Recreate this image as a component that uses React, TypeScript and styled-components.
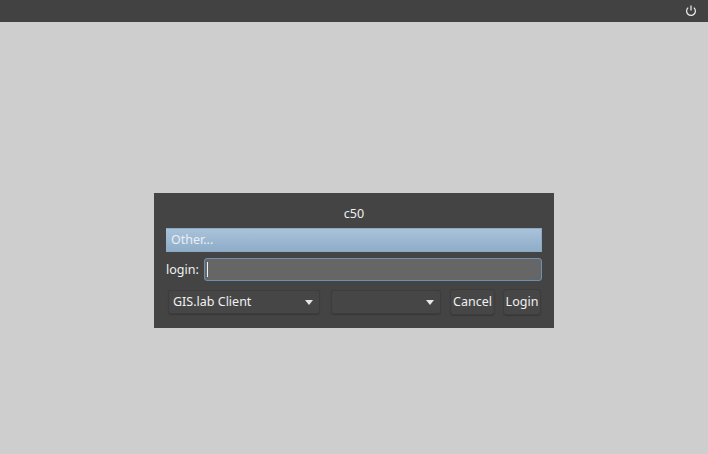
import { createGlobalStyle } from 'styled-components';
import styled from 'styled-components';

const Global = createGlobalStyle`
  html, body {
    margin: 0;
    height: 100%;
    background: #cecece;
  }
  #root {
    height: 100%;
  }
`;

export default function App() {
  return (
    <>
      <Global />
      <S.Page>
        <S.TopBar>
          <S.PowerIcon width="12" height="12" viewBox="0 0 12 12" fill="none">
            <path d="M3.2 2.6 A4.4 4.4 0 1 0 8.8 2.6" stroke="#f0f0f0" strokeWidth="1.2" />
            <path d="M6 0.6 V5.6" stroke="#c8c8c8" strokeWidth="1.6" />
          </S.PowerIcon>
        </S.TopBar>
        <S.Center>
          <S.Dialog>
            <S.Title>c50</S.Title>
            <S.UserRow>Other...</S.UserRow>
            <S.LoginRow>
              <S.Label>login:</S.Label>
              <S.Input>
                <S.Caret />
              </S.Input>
            </S.LoginRow>
            <S.Actions>
              <S.Combo $width={152} $gap={11}>
                GIS.lab Client
                <S.Arrow />
              </S.Combo>
              <S.Combo $width={110} $gap={9}>
                <S.Arrow />
              </S.Combo>
              <S.Button $width={45} $gap={8}>Cancel</S.Button>
              <S.Button $width={38} $gap={0}>Login</S.Button>
            </S.Actions>
          </S.Dialog>
        </S.Center>
      </S.Page>
    </>
  );
}

const S = {
  Page: styled.div`
    display: flex;
    flex-direction: column;
    width: 708px;
    height: 454px;
    overflow: hidden;
    font-family: 'Noto Sans', 'Open Sans', sans-serif;
    font-size: 12.5px;
    color: #f0f0f0;
  `,
  TopBar: styled.div`
    display: flex;
    align-items: center;
    justify-content: flex-end;
    flex: none;
    height: 22px;
    padding-right: 11px;
    box-sizing: border-box;
    background: repeating-conic-gradient(#404040 0 25%, #444444 0 50%) 0 0 / 2px 2px;
  `,
  PowerIcon: styled.svg`
    display: block;
  `,
  Center: styled.div`
    flex: 1;
    padding: 171px 0 0 154px;
  `,
  Dialog: styled.div`
    display: flex;
    flex-direction: column;
    width: 400px;
    height: 135px;
    padding: 0 12px;
    box-sizing: border-box;
    background: #444444;
  `,
  Title: styled.div`
    height: 35px;
    line-height: 42px;
    text-align: center;
  `,
  UserRow: styled.div`
    height: 24px;
    line-height: 21px;
    padding-left: 5px;
    box-sizing: border-box;
    border: 1px solid #8aaac6;
    border-left: none;
    background: linear-gradient(#a9c2d9, #8fadc9);
    color: #e8eff5;
  `,
  LoginRow: styled.div`
    display: flex;
    align-items: center;
    gap: 4px;
    margin-top: 6px;
  `,
  Label: styled.span`
    width: 34px;
    flex: none;
    margin-top: -1px;
  `,
  Input: styled.div`
    display: flex;
    align-items: center;
    flex: 1;
    height: 23px;
    padding-left: 2px;
    box-sizing: border-box;
    border: 1px solid #6b90b0;
    border-radius: 3px;
    background: #666666;
  `,
  Caret: styled.div`
    width: 1px;
    height: 15px;
    background: #f2f2f2;
  `,
  Actions: styled.div`
    display: flex;
    align-items: center;
    margin-top: 8px;
    padding-left: 2px;
  `,
  Combo: styled.div<{ $width: number; $gap: number }>`
    display: flex;
    align-items: center;
    justify-content: space-between;
    flex: none;
    width: ${({ $width }) => $width}px;
    height: 24px;
    margin-right: ${({ $gap }) => $gap}px;
    padding: 0 7px 2px 5px;
    box-sizing: border-box;
    border-radius: 3px;
    background: #464646;
    box-shadow: inset 0 0 0 1px #3d3d3d, 0 1px 1px #383838;
  `,
  Arrow: styled.span`
    width: 0;
    height: 0;
    margin: 2px 0 0 auto;
    border-left: 4px solid transparent;
    border-right: 4px solid transparent;
    border-top: 5px solid #e6e6e6;
  `,
  Button: styled.div<{ $width: number; $gap: number }>`
    flex: none;
    width: ${({ $width }) => $width}px;
    height: 26px;
    margin-right: ${({ $gap }) => $gap}px;
    line-height: 25px;
    text-align: center;
    border-radius: 4px;
    background: #464646;
    box-shadow: inset 0 0 0 1px #3d3d3d, 0 1px 1px #383838;
  `,
};
